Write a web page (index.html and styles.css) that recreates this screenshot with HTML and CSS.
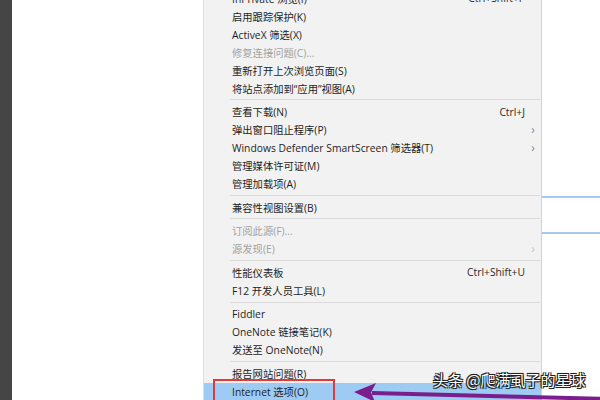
FILE: index.html
```html
<!DOCTYPE html>
<html lang="zh-CN">
<head>
    <meta charset="UTF-8">
    <meta name="viewport" content="width=device-width, initial-scale=1.0">
    <title>工具菜单</title>
    <link rel="stylesheet" href="styles.css">
</head>
<body>
    <div class="page">
        <div class="dark"></div>
        <div class="blank"></div>

        <div class="menu">
            <div class="list">
                <div class="row"><span>InPrivate 浏览(I)</span><span class="key">Ctrl+Shift+P</span><span></span></div>
                <div class="row"><span>启用跟踪保护(K)</span><span></span><span></span></div>
                <div class="row"><span>ActiveX 筛选(X)</span><span></span><span></span></div>
                <div class="row off"><span>修复连接问题(C)...</span><span></span><span></span></div>
                <div class="row"><span>重新打开上次浏览页面(S)</span><span></span><span></span></div>
                <div class="row"><span>将站点添加到“应用”视图(A)</span><span></span><span></span></div>
                <div class="sep"></div>
                <div class="row"><span>查看下载(N)</span><span class="key">Ctrl+J</span><span></span></div>
                <div class="row"><span>弹出窗口阻止程序(P)</span><span></span><span class="more">›</span></div>
                <div class="row"><span>Windows Defender SmartScreen 筛选器(T)</span><span></span><span class="more">›</span></div>
                <div class="row"><span>管理媒体许可证(M)</span><span></span><span></span></div>
                <div class="row"><span>管理加载项(A)</span><span></span><span></span></div>
                <div class="sep"></div>
                <div class="row"><span>兼容性视图设置(B)</span><span></span><span></span></div>
                <div class="sep"></div>
                <div class="row off"><span>订阅此源(F)...</span><span></span><span></span></div>
                <div class="row off"><span>源发现(E)</span><span></span><span class="more">›</span></div>
                <div class="sep"></div>
                <div class="row"><span>性能仪表板</span><span class="key">Ctrl+Shift+U</span><span></span></div>
                <div class="row"><span>F12 开发人员工具(L)</span><span></span><span></span></div>
                <div class="sep"></div>
                <div class="row"><span>Fiddler</span><span></span><span></span></div>
                <div class="row"><span>OneNote 链接笔记(K)</span><span></span><span></span></div>
                <div class="row"><span>发送至 OneNote(N)</span><span></span><span></span></div>
                <div class="sep"></div>
                <div class="row"><span>报告网站问题(R)</span><span></span><span></span></div>
                <div class="row active"><span>Internet 选项(O)</span><span></span><span></span></div>
            </div>
            <div class="mark"></div>
        </div>

        <div class="right">
            <div class="line"></div>
            <div class="line second"></div>
        </div>

        <svg class="arrow" width="260" height="30" viewBox="0 0 260 30">
            <path d="M22 16 L258 22" stroke="#7a1e8c" stroke-width="4" fill="none"/>
            <path d="M4 15 L26 6 L21 15.5 L25 25 Z" fill="#7a1e8c"/>
        </svg>

        <div class="watermark">头条 @爬满虱子的星球</div>
    </div>
</body>
</html>
```

FILE: styles.css
```css
body {
    margin: 0;
    font-family: "Open Sans", "Noto Sans CJK SC", sans-serif;
    background: #fff;
}
.page {
    position: relative;
    display: flex;
    width: 600px;
    height: 400px;
    overflow: hidden;
}
.dark {
    width: 12px;
    background: #454545;
}
.blank {
    width: 191px;
    background: #fff;
}
.menu {
    position: relative;
    width: 337px;
    background: #f2f2f2;
    border-left: 1px solid #dedede;
    border-right: 1px solid #d2d2d2;
}
.list {
    margin-top: -11px;
    padding-left: 2px;
}
.row {
    display: grid;
    grid-template-columns: 1fr auto 16px;
    align-items: center;
    height: 18px;
    padding-left: 26px;
    font-size: 10.3px;
    color: #1e1e1e;
    white-space: nowrap;
}
.row.off {
    color: #a2a2a2;
}
.row.active {
    background: #9dcbf3;
    margin-left: -2px;
    padding-left: 28px;
}
.key {
    color: #2a2a2a;
}
.more {
    color: #8a8a8a;
    font-size: 12px;
    text-align: center;
}
.off .more {
    color: #c4c4c4;
}
.sep {
    height: 5.6px;
    display: flex;
    align-items: center;
    margin-left: 24px;
    margin-right: 1px;
}
.sep::after {
    content: "";
    flex: 1;
    height: 1px;
    background: #dadada;
}
.mark {
    position: absolute;
    left: 9px;
    top: 379px;
    width: 122px;
    height: 24px;
    border: 2px solid #e23a3a;
    box-sizing: border-box;
}
.right {
    flex: 1;
    background: #fff;
    padding-top: 196px;
}
.line {
    height: 2px;
    background: #a9c8ee;
}
.line.second {
    margin-top: 34px;
}
.arrow {
    position: absolute;
    left: 350px;
    top: 377px;
}
.watermark {
    position: absolute;
    left: 433px;
    top: 370px;
    font-family: "Noto Sans CJK SC", sans-serif;
    font-size: 15px;
    line-height: 20px;
    color: #fff;
    text-shadow: -1px -1px 0 #222, 1px -1px 0 #222, -1px 1px 0 #222, 1px 1px 0 #222, 0 0 2px #000;
}
```
